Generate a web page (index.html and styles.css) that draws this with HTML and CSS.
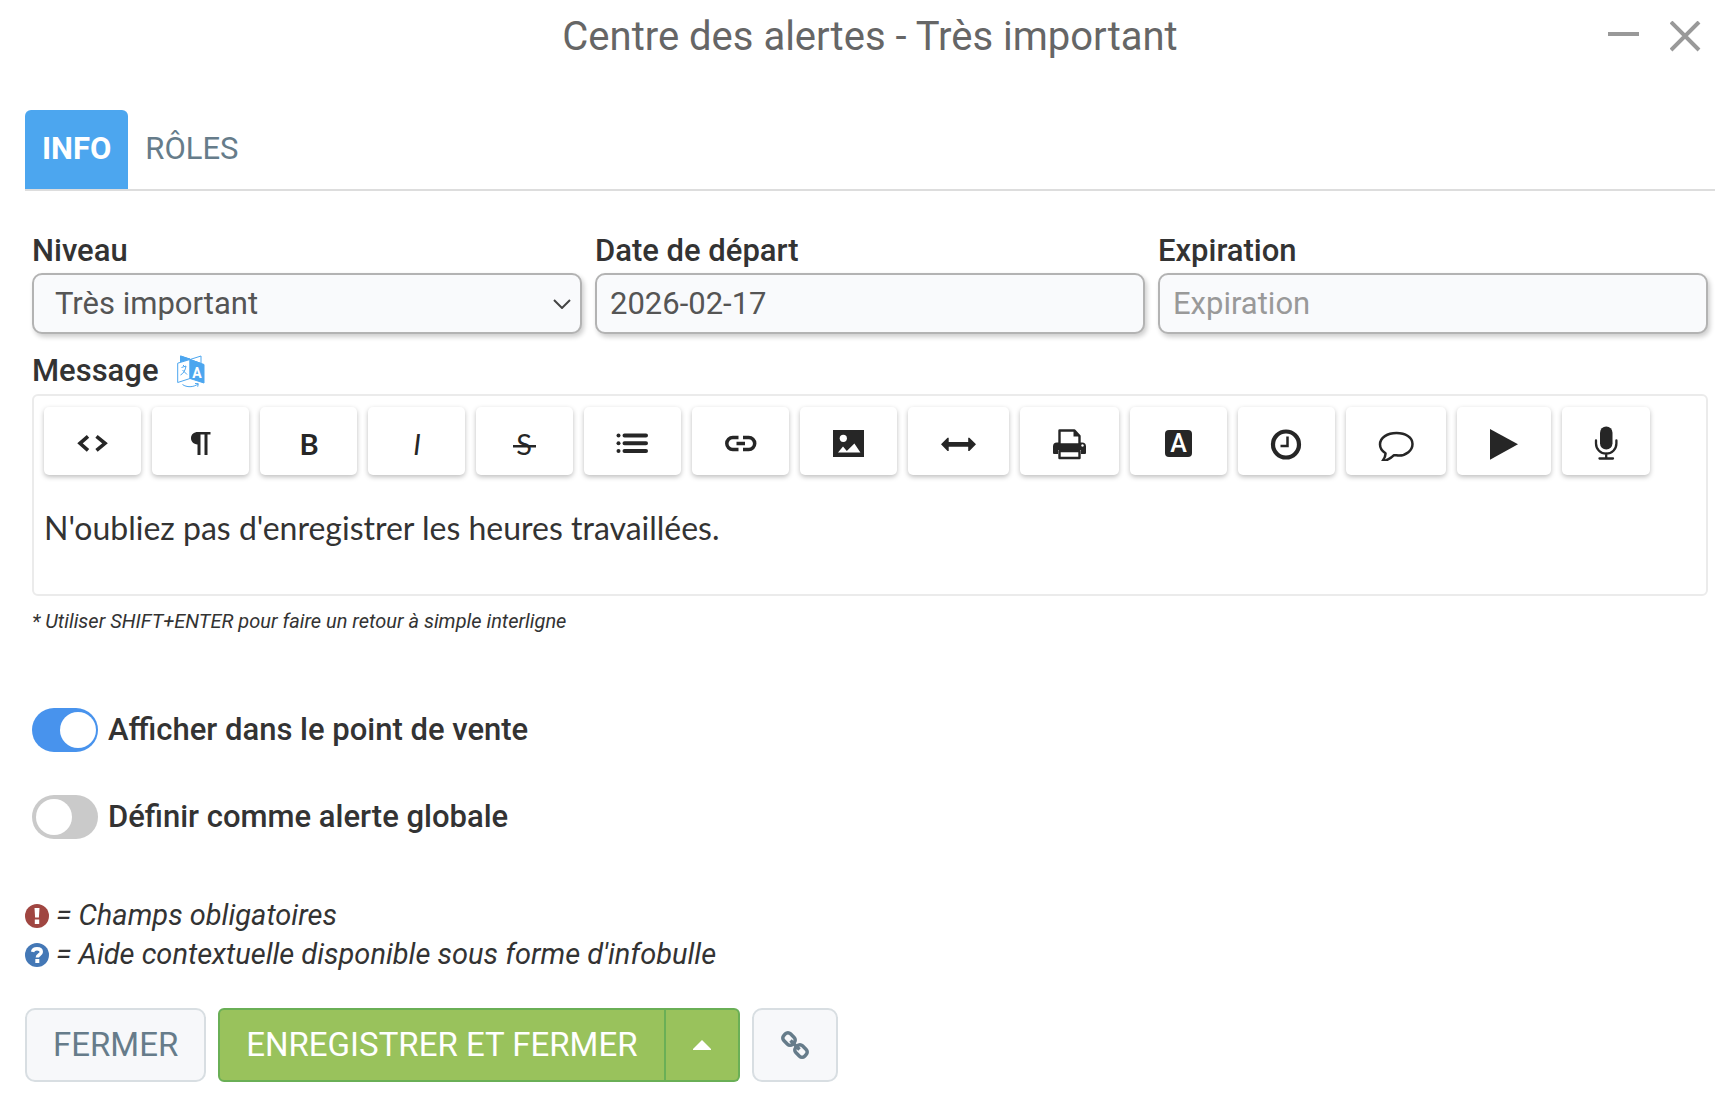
FILE: index.html
```html
<!DOCTYPE html>
<html lang="fr">
  <head>
    <meta charset="UTF-8" />
    <meta name="viewport" content="width=device-width, initial-scale=1.0" />
    <title>Centre des alertes</title>
    <link rel="stylesheet" href="styles.css">
  </head>
  <body>
    <header class="header">
      <h1 class="title">Centre des alertes - Très important</h1>
      <div class="window-buttons">
        <button type="button" aria-label="Réduire">
          <svg width="32" height="32" viewBox="0 0 32 32"><path d="M0 13h31" stroke-width="4" /></svg>
        </button>
        <button type="button" aria-label="Fermer">
          <svg width="32" height="32" viewBox="0 0 32 32"><path d="M1 1l28 28M29 1L1 29" stroke-width="4" /></svg>
        </button>
      </div>
    </header>

    <nav class="tabs">
      <a class="tab active" href="#info">INFO</a>
      <a class="tab" href="#roles">RÔLES</a>
    </nav>

    <form class="form" id="info">
      <div class="fields">
        <div class="field">
          <label for="level">Niveau</label>
          <div class="select">
            <select id="level" name="level">
              <option selected>Très important</option>
            </select>
            <svg class="chevron" width="18" height="10" viewBox="0 0 18 10"><path d="M1 1l8 8 8-8" /></svg>
          </div>
        </div>
        <div class="field">
          <label for="start">Date de départ</label>
          <input type="text" id="start" name="start" value="2026-02-17" />
        </div>
        <div class="field">
          <label for="expiration">Expiration</label>
          <input type="text" id="expiration" name="expiration" placeholder="Expiration" />
        </div>
      </div>

      <div class="message-label">
        <span>Message</span>
        <svg width="28" height="33" viewBox="0 0 28 33" fill="none" stroke="#4ca6ef">
          <path d="M3.500 1v6l9.500-3z" fill="#4ca6ef" />
          <path d="M3.500 1l20.500 7.500V1L13 4.500" />
          <path d="M.7 8.200L13 4.500v19L.7 27.500z" fill="#fff" />
          <path d="M13 4.500l14 5v18.500l-14-4.500z" fill="#4ca6ef" />
          <path d="M4.500 12.500l4.500-1.500c-.5 4-2.500 7.500-5.500 9M6 10l1.500 1.500M5.500 15l4.500 4.500" />
          <path d="M5.500 29.500c4 3 11 3 15.500-.5M18 28.500l3.300.2-.6 3" />
          <text x="20" y="22.500" text-anchor="middle" font-size="14" font-weight="700" fill="#fff" stroke="none">A</text>
        </svg>
      </div>

      <div class="editor">
        <div class="toolbar">
          <button type="button" aria-label="HTML">
            <svg width="33" height="40" viewBox="0 -3 33 40"><path class="line" d="M12 12.300L4 19.300l8 7M20.500 12.300l8.500 7-8.500 7" stroke-width="3.600" /></svg>
          </button>
          <button type="button" aria-label="Paragraphe">
            <svg width="33" height="40" viewBox="0 -3 33 40"><path d="M26.500 8v2.500h-3V31h-3V10.500h-4V31h-3V20.500C9.500 20 7 17.500 7 14.200 7 10.500 9.800 8 14 8z" /></svg>
          </button>
          <button type="button" aria-label="Gras">
            <svg width="33" height="40" viewBox="0 -3 33 40"><text class="lato" x="17" y="31" font-size="29" font-weight="700">B</text></svg>
          </button>
          <button type="button" aria-label="Italique">
            <svg width="33" height="40" viewBox="0 -3 33 40"><text class="lato" x="17" y="31" font-size="29" font-style="italic">I</text></svg>
          </button>
          <button type="button" aria-label="Barré">
            <svg width="33" height="40" viewBox="0 -3 33 40"><text class="lato" x="16" y="31" font-size="29">S</text><path d="M5 21h23v2.500H5z" /></svg>
          </button>
          <button type="button" aria-label="Liste">
            <svg width="33" height="40" viewBox="0 -3 33 40">
              <circle cx="2.500" cy="11.500" r="2" /><circle cx="2.500" cy="19.300" r="2" /><circle cx="2.500" cy="27" r="2" />
              <path class="line" d="M8.500 11.500h21.500M8.500 19.300h21.500M8.500 27h21.500" stroke-width="4" stroke-linecap="round" />
            </svg>
          </button>
          <button type="button" aria-label="Lien">
            <svg width="33" height="40" viewBox="0 -3 33 40"><path class="line" d="M14.500 13.500H8.800a6 6 0 0 0 0 12h5.700M19 13.500h5.700a6 6 0 0 1 0 12H19M12.500 19.500h8.500" stroke-width="3.500" /></svg>
          </button>
          <button type="button" aria-label="Image">
            <svg width="33" height="40" viewBox="0 -3 33 40"><path d="M1 6h31v27H1z" /><path class="cut" d="M6 28.500l5-6 3.800 4.500 7.600-7.500 6 9z" /><circle class="cut" cx="11.300" cy="14.300" r="3.600" /></svg>
          </button>
          <button type="button" aria-label="Ligne">
            <svg width="37" height="40" viewBox="0 -3 37 40"><path d="M1 20.300l6.500-6.600h1.200V18h19.500v-4.300h1.200l6.600 6.600-6.600 6.600h-1.200v-4.100H8.700v4.100H7.500z" /></svg>
          </button>
          <button type="button" aria-label="Imprimer">
            <svg width="35" height="40" viewBox="0 -3 35 40">
              <path d="M5 18.500h25q4 0 4 4V29q0 1-1 1h-4v-4H6v4H2q-1 0-1-1v-6.500q0-4 4-4z" />
              <path class="line white" d="M7.500 20.500v-14h15l5 5.500v8.500z" stroke-width="2.400" stroke-linejoin="round" />
              <path d="M21.500 6v6.500h6.500z" />
              <path d="M6 20.500h23V26H6z" />
              <path class="line white" d="M7.500 27h20v7h-20z" stroke-width="2.400" stroke-linejoin="round" />
              <circle class="cut" cx="30.500" cy="21.500" r="1.200" />
            </svg>
          </button>
          <button type="button" aria-label="Couleur">
            <svg width="33" height="40" viewBox="0 -3 33 40"><rect x="3" y="6" width="27" height="27" rx="4" /><text class="cut" x="16.500" y="27.500" font-size="25" font-weight="500">A</text></svg>
          </button>
          <button type="button" aria-label="Heure">
            <svg width="33" height="40" viewBox="0 -3 33 40"><circle class="line" cx="16" cy="20.500" r="13" stroke-width="4.200" /><path class="line" d="M17.500 12.500v9.500h-7" stroke-width="2.500" /></svg>
          </button>
          <button type="button" aria-label="Commentaire">
            <svg width="36" height="40" viewBox="0 -3 36 40"><path class="line" d="M18.500 9C27.500 9 34.500 13.500 34.500 20s-6.500 11.500-13.500 11.500c-2 0-3.500-.3-5-.3-2.500 2.500-6.500 5.300-11.500 5.800 2-2.500 3.200-5 3-7.700C4 27 2 24 2 20.500 2 13.500 9.500 9 18.500 9z" stroke-width="2.500" stroke-linejoin="round" /></svg>
          </button>
          <button type="button" aria-label="Lecture">
            <svg width="30" height="40" viewBox="0 -3 30 40"><path d="M1 5l28 15.300L1 35.700z" /></svg>
          </button>
          <button type="button" aria-label="Dictée">
            <svg width="24" height="40" viewBox="0 -3 24 40"><rect x="6" y="2.500" width="12.500" height="23" rx="6.200" /><path class="line" d="M2 16.500v3a10.200 10.200 0 0 0 20.400 0v-3M12.200 29.500v5M5.500 34.500h13.500" stroke-width="2.300" stroke-linecap="round" /></svg>
          </button>
        </div>
        <div class="content" contenteditable="true" aria-label="Message">N'oubliez pas d'enregistrer les heures travaillées.</div>
      </div>
      <p class="hint">* Utiliser SHIFT+ENTER pour faire un retour à simple interligne</p>

      <div class="toggles">
        <label class="toggle" for="pos">
          <input type="checkbox" id="pos" name="pos" checked />
          Afficher dans le point de vente
        </label>
        <label class="toggle" for="global">
          <input type="checkbox" id="global" name="global" />
          Définir comme alerte globale
        </label>
      </div>
    </form>

    <footer class="footer">
      <p class="legend">
        <svg width="24" height="24" viewBox="0 0 24 24">
          <circle cx="12" cy="12" r="12" fill="#a04641" />
          <path d="M9.500 4h5l-.6 9.500h-3.800zM9.800 15.500h4.400V20H9.800z" fill="#fff" />
        </svg>
        = Champs obligatoires
      </p>
      <p class="legend">
        <svg width="24" height="24" viewBox="0 0 24 24">
          <circle cx="12" cy="12" r="12" fill="#4478b6" />
          <path d="M7.500 8.800C8 6.700 9.800 5.700 12 5.700c2.600 0 4.300 1.300 4.300 3.300 0 2.800-4 2.700-4 5.500" fill="none" stroke="#fff" stroke-width="3.400" />
          <path d="M10.300 16h4v4h-4z" fill="#fff" />
        </svg>
        = Aide contextuelle disponible sous forme d'infobulle
      </p>
      <div class="actions">
        <button type="button" class="btn">FERMER</button>
        <div class="btn-group">
          <button type="submit" form="info" class="btn btn-save">ENREGISTRER ET FERMER</button>
          <button type="button" class="btn btn-save btn-caret" aria-label="Autres actions">
            <svg width="18" height="10" viewBox="0 0 18 10"><path d="M9 0l9 9v1H0V9z" fill="#fff" /></svg>
          </button>
        </div>
        <button type="button" class="btn btn-link" aria-label="Copier le lien">
          <svg width="28" height="28" viewBox="0 0 28 28" fill="none" stroke="#667c8a" stroke-width="3.500">
            <rect x="-6.200" y="-4.700" width="12.400" height="9.400" rx="3.600" transform="translate(8 8) rotate(45)" />
            <rect x="-6.200" y="-4.700" width="12.400" height="9.400" rx="3.600" transform="translate(20 20) rotate(45)" />
            <path d="M9.500 9.500l9 9" />
          </svg>
        </button>
      </div>
    </footer>
  </body>
</html>
```
FILE: styles.css
```css
* {
  box-sizing: border-box;
}
body {
  margin: 0;
  background: #fff;
  color: #333;
  font-family: Roboto, sans-serif;
  font-size: 31px;
  line-height: 40px;
}
h1,
p {
  margin: 0;
}
button,
input,
select {
  font: inherit;
}
button {
  padding: 0;
  border: 0;
  background: none;
  cursor: pointer;
}
svg {
  display: block;
  flex: none;
}
.header {
  display: grid;
  grid-template-columns: 1fr auto 1fr;
  align-items: center;
  height: 74px;
  padding: 0 26px 0 38px;
}
.title {
  grid-column: 2;
  color: #666;
  font-size: 40px;
  font-weight: 400;
}
.window-buttons {
  display: flex;
  justify-content: flex-end;
  gap: 30px;
}
.window-buttons svg {
  stroke: #999;
}
.tabs {
  display: flex;
  margin: 36px 13px 0 25px;
  border-bottom: 2px solid #ddd;
}
.tab {
  padding: 19px 17px 20px;
  border-radius: 6px 6px 0 0;
  color: #667c8a;
  text-decoration: none;
}
.tab.active {
  background: #4ca6ef;
  color: #fff;
  font-weight: 700;
}
.form {
  padding: 40px 20px 0 32px;
}
.fields {
  display: grid;
  grid-template-columns: repeat(3, 1fr);
  gap: 13px;
}
.field {
  display: flex;
  flex-direction: column;
  gap: 2px;
}
.field label,
.message-label,
.toggle {
  font-weight: 500;
}
.field input,
.field select {
  width: 100%;
  height: 61px;
  padding: 0 13px;
  border: 2px solid #b3b3b3;
  border-radius: 10px;
  background: #f9fafc;
  box-shadow: 2px 3px 5px rgba(0, 0, 0, 0.2);
  color: #555;
}
.field select {
  appearance: none;
  padding-left: 21px;
}
.field input::placeholder {
  color: #999;
}
.select {
  position: relative;
}
.chevron {
  position: absolute;
  top: 26px;
  right: 11px;
  fill: none;
  stroke: #444;
  stroke-width: 2;
  pointer-events: none;
}
.message-label {
  display: flex;
  align-items: center;
  gap: 18px;
  margin: 17px 0 3px;
}
.editor {
  min-height: 202px;
  padding: 11px 10px;
  border: 2px solid #ebebeb;
  border-radius: 6px;
}
.toolbar {
  display: flex;
  flex-wrap: wrap;
  gap: 11px;
}
.toolbar button {
  padding: 14px 32px;
  border-radius: 5px;
  box-shadow: 0 2px 5px rgba(0, 0, 0, 0.26);
}
.toolbar svg {
  fill: #262626;
}
.toolbar text {
  text-anchor: middle;
}
.toolbar .lato {
  font-family: Lato, sans-serif;
}
.toolbar .line {
  fill: none;
  stroke: #262626;
}
.toolbar .white,
.toolbar .cut {
  fill: #fff;
}
.content {
  margin-top: 33px;
  font-family: "Trebuchet MS", Lato, sans-serif;
  font-size: 32px;
  outline: none;
}
.hint {
  margin-top: 10px;
  font-size: 20px;
  font-style: italic;
  line-height: 30px;
}
.toggles {
  display: flex;
  flex-direction: column;
  gap: 43px;
  margin-top: 72px;
}
.toggle {
  display: flex;
  align-items: center;
  gap: 10px;
}
.toggle input {
  appearance: none;
  width: 66px;
  height: 44px;
  margin: 0;
  padding: 4px;
  border-radius: 22px;
  background: #cacaca;
}
.toggle input::before {
  content: "";
  display: block;
  width: 36px;
  height: 36px;
  border-radius: 50%;
  background: #fff;
}
.toggle input:checked {
  padding-left: 28px;
  background: #4893ed;
}
.footer {
  padding: 57px 25px 20px;
}
.legend {
  display: flex;
  align-items: center;
  gap: 7px;
  font-size: 29px;
  font-style: italic;
  line-height: 39px;
}
.actions {
  display: flex;
  gap: 12px;
  margin-top: 34px;
}
.btn {
  height: 74px;
  padding: 0 26px;
  border: 2px solid #d8dee2;
  border-radius: 10px;
  background: #f7f8fa;
  color: #667c8a;
  font-size: 33px;
}
.btn-link {
  padding: 0 27px;
}
.btn-group {
  display: flex;
}
.btn-save {
  border-color: #6aaf56;
  border-radius: 6px 0 0 6px;
  background: #99c25c;
  color: #fff;
}
.btn-caret {
  padding: 0 27px;
  border-left: 0;
  border-radius: 0 6px 6px 0;
}
```
